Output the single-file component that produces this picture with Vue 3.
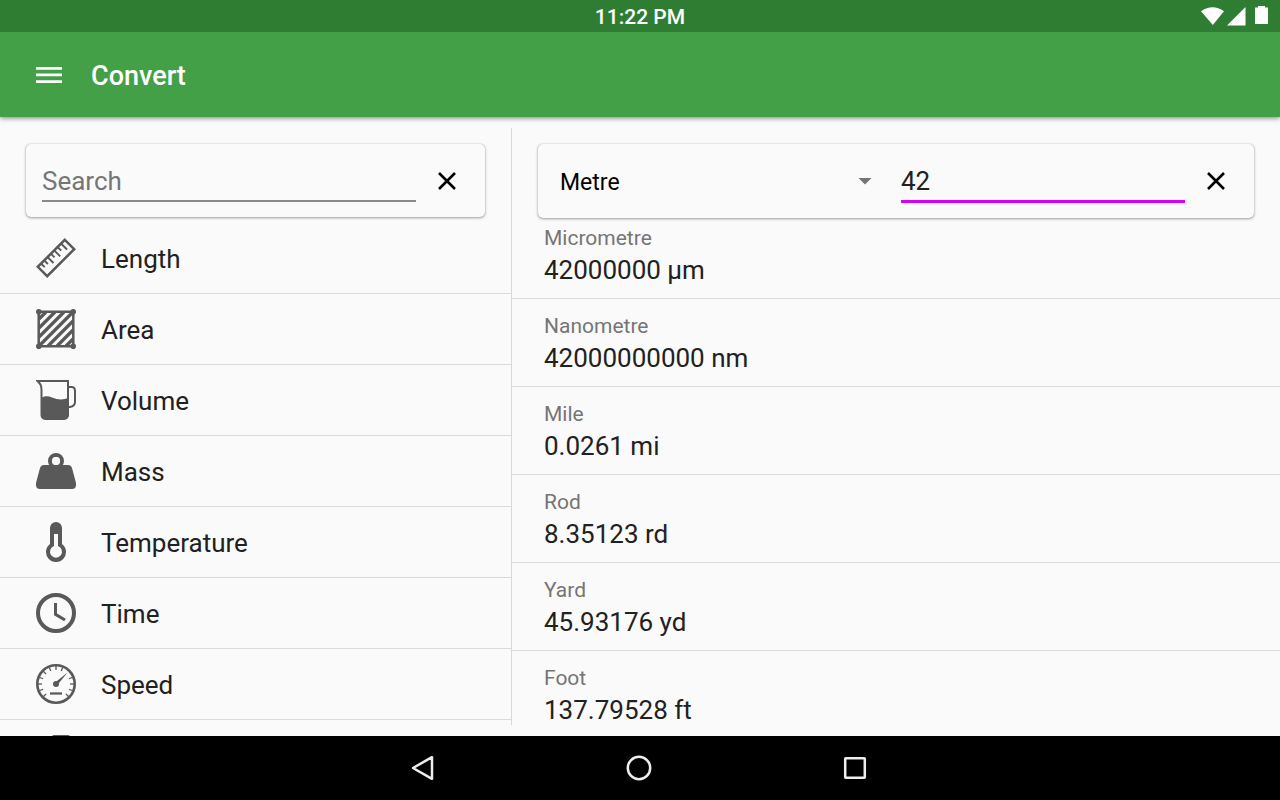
<script setup>
import { ref } from 'vue'

const search = ref('')
const unit = ref('Metre')
const amount = ref('42')

const categories = [
  { name: 'Length', icon: 'ruler' },
  { name: 'Area', icon: 'area' },
  { name: 'Volume', icon: 'jug' },
  { name: 'Mass', icon: 'weight' },
  { name: 'Temperature', icon: 'thermometer' },
  { name: 'Time', icon: 'clock' },
  { name: 'Speed', icon: 'gauge' },
  { name: '', icon: 'block' },
]

const results = [
  { name: 'Micrometre', value: '42000000 µm' },
  { name: 'Nanometre', value: '42000000000 nm' },
  { name: 'Mile', value: '0.0261 mi' },
  { name: 'Rod', value: '8.35123 rd' },
  { name: 'Yard', value: '45.93176 yd' },
  { name: 'Foot', value: '137.79528 ft' },
]

const ticks = [-135, -112, -90, -68, -45, -22, 0, 22, 68, 90, 112, 135]
</script>

<template>
  <div class="screen">
    <div class="status">
      <span></span>
      <time>11:22 PM</time>
      <svg class="status-icons" width="69" height="20" viewBox="0 0 69 20" fill="#fff" aria-hidden="true">
        <path d="M1 5.300Q12.500-3 24 5.300L12.800 19Z" />
        <path d="M45.500 1V19.500H27Z" />
        <path d="M58 0h7v1.500h3V18H55V1.500h3Z" />
      </svg>
    </div>

    <header class="appbar">
      <button class="menu" type="button" aria-label="Menu">
        <svg width="26" height="18" viewBox="0 0 26 18" fill="#fff">
          <path d="M0 1h26v2.700H0zM0 7.600h26v2.700H0zM0 14.300h26V17H0z" />
        </svg>
      </button>
      <h1>Convert</h1>
    </header>

    <main class="panes">
      <section class="pane categories">
        <div class="card search">
          <input v-model="search" class="field" type="text" placeholder="Search" aria-label="Search" />
          <button class="clear" type="button" aria-label="Clear search">
            <svg width="18" height="18" viewBox="0 0 18 18" stroke="#000" stroke-width="2.600"><path d="M1 1 17 17M17 1 1 17" /></svg>
          </button>
        </div>
        <ul class="list">
          <li v-for="c in categories" :key="c.icon">
            <button class="category" type="button">
              <svg class="icon" viewBox="0 0 40 40" aria-hidden="true">
                <g v-if="c.icon === 'ruler'" fill="none" stroke="#595959">
                  <path d="M28.800 1.800 38.200 11.200 11.200 38.200 1.800 28.800Z" stroke-width="2.500" />
                  <path d="M5 25.500l3.700 3.700M8.200 22.300l3.700 3.700M11.500 19l6 6M14.800 15.700l3.700 3.700M18.200 12.300l6 6M21.500 9l3.700 3.700M25 5.500l6 6" stroke-width="1.900" />
                </g>
                <g v-else-if="c.icon === 'area'" fill="none" stroke="#595959" stroke-width="2.500">
                  <path d="M2.700 2.700h34.600v34.600H2.700z" />
                  <path d="M3 10 10 3M3 19 19 3M3 28 28 3M3 37 37 3M12 37 37 12M21 37 37 21M30 37l7-7" stroke-width="3.200" />
                  <g fill="#595959" stroke="none">
                    <circle cx="2.800" cy="2.800" r="2.800" /><circle cx="37.200" cy="2.800" r="2.800" />
                    <circle cx="2.800" cy="37.200" r="2.800" /><circle cx="37.200" cy="37.200" r="2.800" />
                  </g>
                </g>
                <g v-else-if="c.icon === 'jug'">
                  <path d="M1.500 1H32v34a4 4 0 0 1-4 4H9.500a4 4 0 0 1-4-4V9.500C5.500 5 4 3.500 1.500 1ZM32 7h3.500Q39 7 39 11v11q0 4-5 5h-2" fill="none" stroke="#595959" stroke-width="2" />
                  <path d="M5 18c3-2 7-2.500 11-.5 6 2.500 11 2.500 16.500.5V35a4.500 4.500 0 0 1-4.500 4.500H9.500A4.500 4.500 0 0 1 5 35Z" fill="#595959" />
                </g>
                <g v-else-if="c.icon === 'weight'" fill="#595959">
                  <circle cx="20" cy="10" r="6" fill="none" stroke="#595959" stroke-width="4" />
                  <path d="M8 14h24q3 0 4 3l4 15q.500 6-4 6H4q-4.500 0-4-6L4 17q1-3 4-3Z" />
                  <circle cx="20" cy="10" r="4" fill="#fafafa" />
                </g>
                <g v-else-if="c.icon === 'thermometer'">
                  <path d="M14 6a6 6 0 0 1 12 0v16a10 10 0 1 1-12 0Z" fill="#595959" />
                  <path d="M18 12h4v12a6 6 0 1 1-4 0Z" fill="#fafafa" />
                </g>
                <g v-else-if="c.icon === 'clock'" fill="none" stroke="#595959">
                  <circle cx="20" cy="20" r="18" stroke-width="4" />
                  <path d="M19.500 10v11.300L29 27" stroke-width="3" />
                </g>
                <g v-else-if="c.icon === 'gauge'" fill="none" stroke="#595959">
                  <circle cx="20" cy="20" r="18.700" stroke-width="2.600" />
                  <path v-for="t in ticks" :key="t" d="M20 2v4" stroke-width="1.300" :transform="`rotate(${t} 20 20)`" />
                  <path d="M14 29.500h12" stroke-width="2.200" />
                  <circle cx="20" cy="20" r="3" fill="#595959" stroke="none" />
                  <path d="M18.800 18.800 31.500 8.500 21.200 21.200Z" fill="#595959" stroke="none" />
                </g>
                <path v-else d="M18 0h14q2 0 2 2v36H16V2q0-2 2-2Z" fill="#595959" />
              </svg>
              <span>{{ c.name }}</span>
            </button>
          </li>
        </ul>
      </section>

      <section class="pane results">
        <div class="card convert">
          <div class="unit">
            <select v-model="unit" aria-label="Unit">
              <option>Metre</option>
            </select>
            <svg width="14" height="8" viewBox="0 0 14 8" fill="#757575" aria-hidden="true"><path d="M.5 1h13L7 7.500Z" /></svg>
          </div>
          <input v-model="amount" class="field active" type="text" inputmode="decimal" aria-label="Amount" />
          <button class="clear" type="button" aria-label="Clear amount">
            <svg width="18" height="18" viewBox="0 0 18 18" stroke="#000" stroke-width="2.600"><path d="M1 1 17 17M17 1 1 17" /></svg>
          </button>
        </div>
        <dl class="values">
          <div v-for="r in results" :key="r.name" class="value">
            <dt>{{ r.name }}</dt>
            <dd>{{ r.value }}</dd>
          </div>
        </dl>
      </section>
    </main>

    <nav class="navbar" aria-label="System">
      <button type="button" aria-label="Back">
        <svg width="26" height="26" viewBox="0 0 26 26"><path d="M22 2.200V23.800L3 13Z" /></svg>
      </button>
      <button type="button" aria-label="Home">
        <svg width="26" height="26" viewBox="0 0 26 26"><circle cx="13" cy="13" r="11.200" /></svg>
      </button>
      <button type="button" aria-label="Recent apps">
        <svg width="26" height="26" viewBox="0 0 26 26"><rect x="3.200" y="3.200" width="19.600" height="19.600" rx=".5" /></svg>
      </button>
    </nav>
  </div>
</template>

<style>
body {
  margin: 0;
}
</style>

<style scoped>
.screen {
  display: flex;
  flex-direction: column;
  height: 100vh;
  background: #fafafa;
  color: #212121;
  font-family: Roboto, "Noto Sans", sans-serif;
  font-size: 26px;
  overflow: hidden;
}

.screen * {
  box-sizing: border-box;
}

button,
input,
select {
  margin: 0;
  padding: 0;
  border: 0;
  border-radius: 0;
  outline: 0;
  background: none;
  color: inherit;
  font: inherit;
}

svg {
  display: block;
  flex: none;
}

.status {
  position: relative;
  z-index: 3;
  display: grid;
  grid-template-columns: 1fr auto 1fr;
  align-items: center;
  flex: none;
  height: 32px;
  padding: 0 11px;
  background: #2e7d32;
  color: #fff;
  font-size: 21px;
  font-weight: 500;
}

.status time {
  padding-top: 2px;
}

.status-icons {
  justify-self: end;
}

.appbar {
  position: relative;
  z-index: 2;
  display: flex;
  align-items: center;
  gap: 29px;
  flex: none;
  height: 85px;
  padding: 0 36px;
  background: #43a047;
  color: #fff;
  box-shadow: 0 1px 5px rgba(0, 0, 0, 0.5);
}

h1 {
  margin: 0;
  padding-top: 2px;
  font-size: 27px;
  font-weight: 500;
}

.panes {
  display: grid;
  grid-template-columns: 2fr 3fr;
  flex: 1;
  min-height: 0;
}

.pane {
  position: relative;
  display: flex;
  flex-direction: column;
  min-width: 0;
  min-height: 0;
  overflow: hidden;
  padding-top: 27px;
}

.categories::after {
  content: "";
  position: absolute;
  top: 11px;
  right: 0;
  bottom: 11px;
  width: 1px;
  background: #d8d8d8;
}

.card {
  position: relative;
  z-index: 1;
  display: flex;
  align-items: center;
  flex: none;
  height: 73px;
  margin: 0 27px 0 26px;
  border-radius: 5px;
  background: #fafafa;
  box-shadow: 0 1px 3px rgba(0, 0, 0, 0.36), 0 0 1px rgba(0, 0, 0, 0.3);
}

.search {
  padding: 0 29px 0 16px;
}

.convert {
  height: 74px;
  margin: 0 26px;
  padding: 0 29px 0 22px;
}

.field {
  flex: 1;
  min-width: 0;
  height: 42px;
  border-bottom: 2px solid #8a8a8a;
  padding-top: 2px;
}

.field::placeholder {
  color: #767676;
  opacity: 1;
}

.field.active {
  flex: 284;
  height: 43px;
  border-bottom: 3px solid #d500f9;
}

.clear {
  display: flex;
  margin-left: 22px;
}

.unit {
  display: flex;
  flex: 312;
  align-items: center;
  margin-right: 29px;
  color: #000;
  font-size: 23px;
}

.unit select {
  flex: 1;
  padding-top: 2px;
  appearance: none;
}

.list {
  flex: 1;
  min-height: 0;
  margin: 6px 0 0;
  padding: 0;
  list-style: none;
  overflow: hidden;
}

.list li {
  margin-right: 1px;
  border-bottom: 1px solid #dadada;
}

.category {
  display: flex;
  align-items: center;
  gap: 25px;
  width: 100%;
  height: 70px;
  padding: 0 36px;
  text-align: left;
}

.category span {
  padding-top: 2px;
}

.icon {
  width: 40px;
  height: 40px;
}

.values {
  margin: -7px 0 0;
}

.value {
  height: 88px;
  padding: 14px 32px 0;
  border-bottom: 1px solid #dadada;
}

dt {
  color: #757575;
  font-size: 21px;
  line-height: 26px;
}

dd {
  margin: 0;
  line-height: 38px;
}

.navbar {
  position: relative;
  z-index: 2;
  display: flex;
  justify-content: center;
  align-items: center;
  gap: 190px;
  flex: none;
  height: 64px;
  padding: 0 2px 0 0;
  background: #000;
}

.navbar svg {
  fill: none;
  stroke: #eee;
  stroke-width: 2.5;
  stroke-linejoin: round;
}
</style>
